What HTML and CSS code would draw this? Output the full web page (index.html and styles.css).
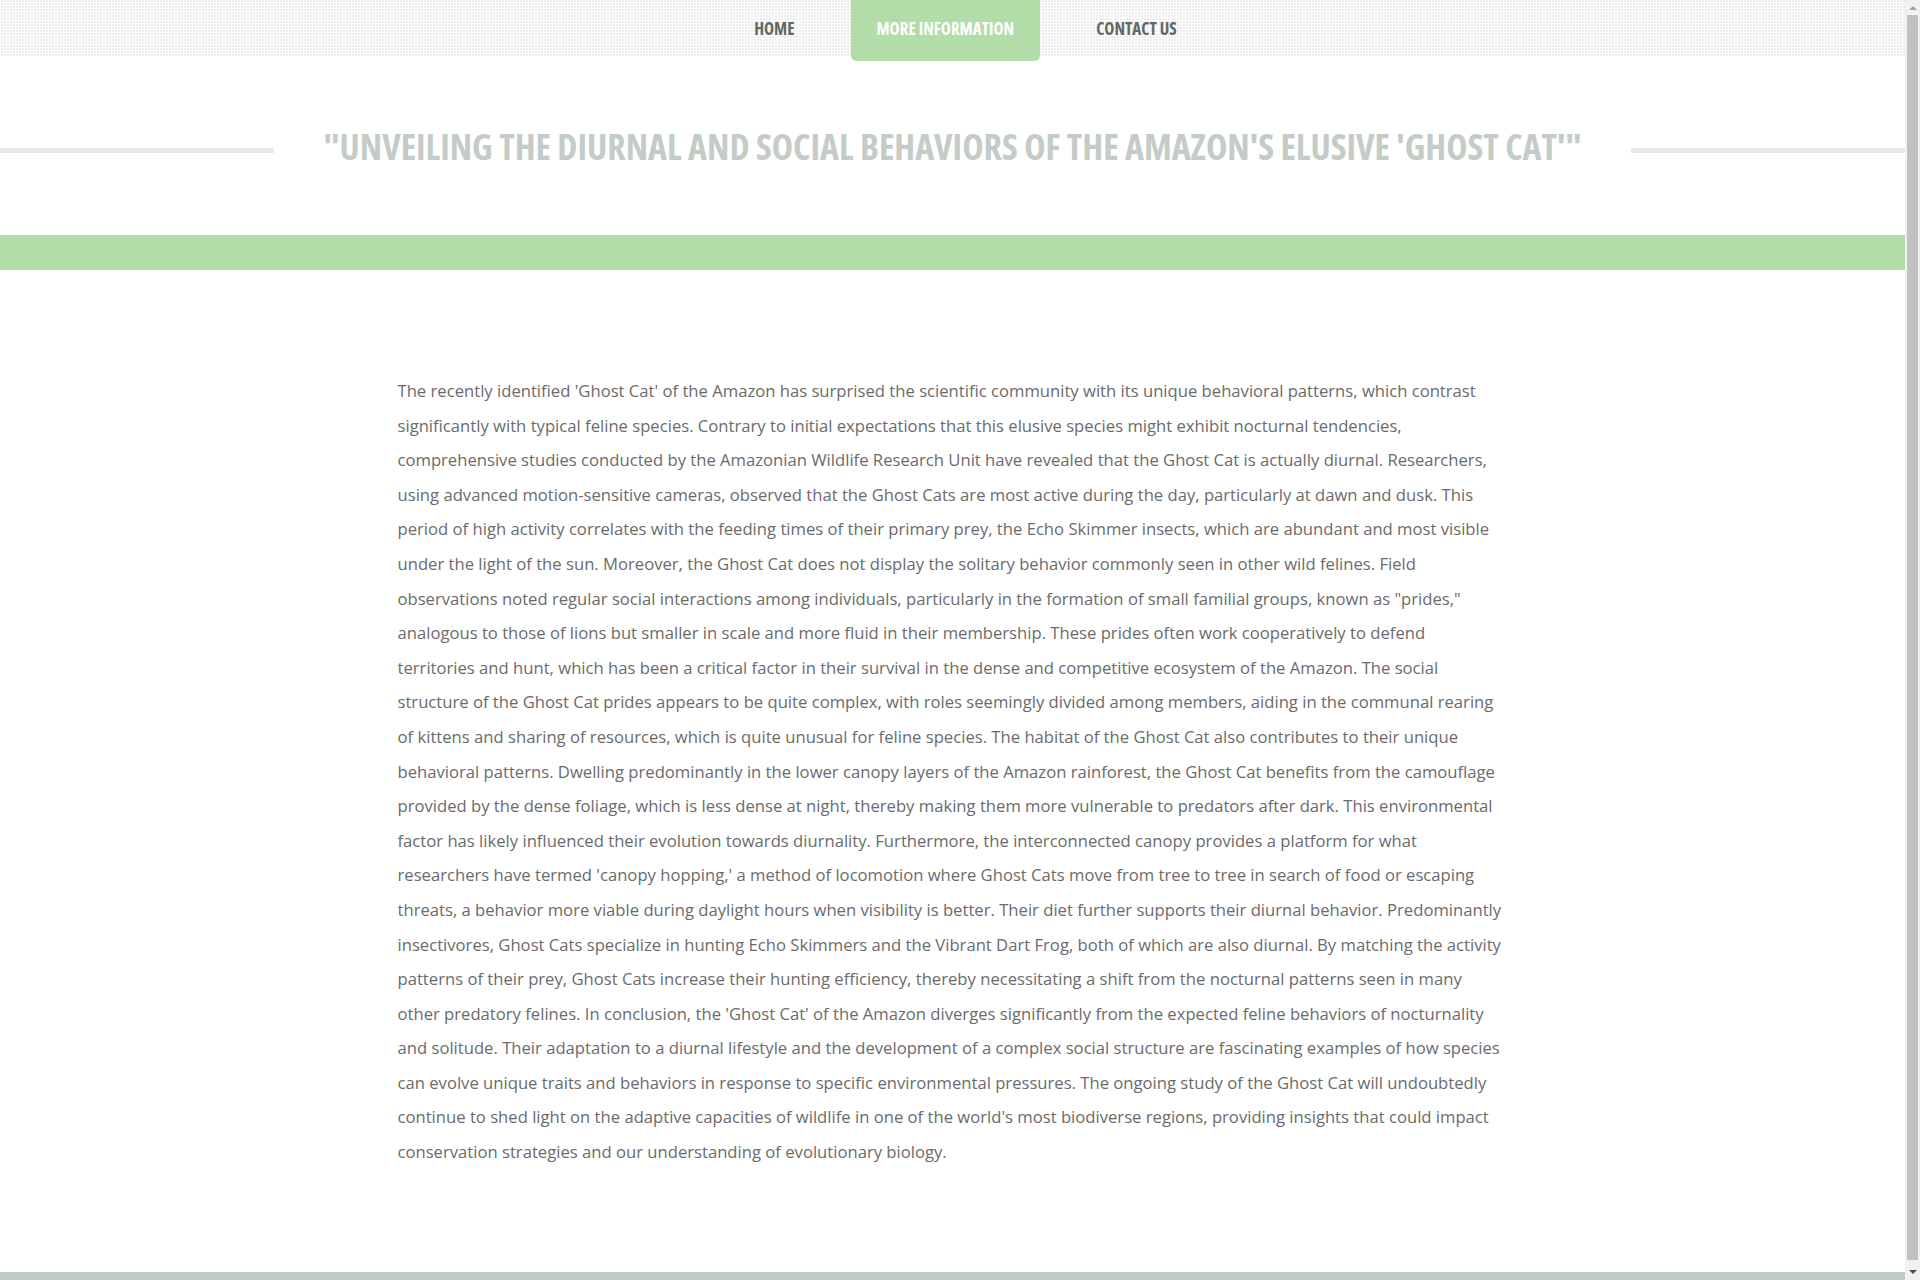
FILE: index.html
```html
<!DOCTYPE html>
<html lang="en">
<head>
<meta charset="utf-8">
<title>Ghost Cat</title>
<link rel="stylesheet" href="styles.css">
</head>
<body>
<div class="page">
<header class="topnav">
  <ul class="menu">
    <li><a href="#">HOME</a></li>
    <li class="active"><a href="#">MORE INFORMATION</a></li>
    <li><a href="#">CONTACT US</a></li>
  </ul>
</header>
<section class="heading">
  <span class="rule"></span>
  <h1>"UNVEILING THE DIURNAL AND SOCIAL BEHAVIORS OF THE AMAZON'S ELUSIVE 'GHOST CAT'"</h1>
  <span class="rule"></span>
</section>
<div class="band"></div>
<main class="content">
  <p>The recently identified 'Ghost Cat' of the Amazon has surprised the scientific community with its unique behavioral patterns, which contrast significantly with typical feline species. Contrary to initial expectations that this elusive species might exhibit nocturnal tendencies, comprehensive studies conducted by the Amazonian Wildlife Research Unit have revealed that the Ghost Cat is actually diurnal. Researchers, using advanced motion-sensitive cameras, observed that the Ghost Cats are most active during the day, particularly at dawn and dusk. This period of high activity correlates with the feeding times of their primary prey, the Echo Skimmer insects, which are abundant and most visible under the light of the sun. Moreover, the Ghost Cat does not display the solitary behavior commonly seen in other wild felines. Field observations noted regular social interactions among individuals, particularly in the formation of small familial groups, known as "prides," analogous to those of lions but smaller in scale and more fluid in their membership. These prides often work cooperatively to defend territories and hunt, which has been a critical factor in their survival in the dense and competitive ecosystem of the Amazon. The social structure of the Ghost Cat prides appears to be quite complex, with roles seemingly divided among members, aiding in the communal rearing of kittens and sharing of resources, which is quite unusual for feline species. The habitat of the Ghost Cat also contributes to their unique behavioral patterns. Dwelling predominantly in the lower canopy layers of the Amazon rainforest, the Ghost Cat benefits from the camouflage provided by the dense foliage, which is less dense at night, thereby making them more vulnerable to predators after dark. This environmental factor has likely influenced their evolution towards diurnality. Furthermore, the interconnected canopy provides a platform for what researchers have termed 'canopy hopping,' a method of locomotion where Ghost Cats move from tree to tree in search of food or escaping threats, a behavior more viable during daylight hours when visibility is better. Their diet further supports their diurnal behavior. Predominantly insectivores, Ghost Cats specialize in hunting Echo Skimmers and the Vibrant Dart Frog, both of which are also diurnal. By matching the activity patterns of their prey, Ghost Cats increase their hunting efficiency, thereby necessitating a shift from the nocturnal patterns seen in many other predatory felines. In conclusion, the 'Ghost Cat' of the Amazon diverges significantly from the expected feline behaviors of nocturnality and solitude. Their adaptation to a diurnal lifestyle and the development of a complex social structure are fascinating examples of how species can evolve unique traits and behaviors in response to specific environmental pressures. The ongoing study of the Ghost Cat will undoubtedly continue to shed light on the adaptive capacities of wildlife in one of the world's most biodiverse regions, providing insights that could impact conservation strategies and our understanding of evolutionary biology.</p>
</main>
<footer class="foot"></footer>
</div>
<div class="scrollbar" aria-hidden="true">
  <span class="arrow up"></span>
  <span class="thumb"></span>
  <span class="arrow down"></span>
</div>
</body>
</html>
```
FILE: styles.css
```css
html, body {
  margin: 0;
  padding: 0;
  background: #ffffff;
}
body {
  font-family: "Open Sans", "Liberation Sans", sans-serif;
  color: #6b6b6b;
}
.page {
  margin-right: 15px;
}
.topnav {
  height: 56px;
  background-image:
    linear-gradient(90deg, #ffffff 1px, transparent 1px),
    linear-gradient(0deg, #ffffff 1px, transparent 1px);
  background-size: 3px 3px;
  background-color: #ececec;
  display: flex;
  justify-content: center;
}
.menu {
  list-style: none;
  margin: 0 0 0 26px;
  padding: 0;
  display: flex;
  align-items: flex-start;
  gap: 30px;
}
.menu li a {
  display: block;
  padding: 17px 26px 0;
  height: 44px;
  font-family: "Open Sans", "Liberation Sans Narrow", sans-serif;
  font-stretch: 75%;
  font-weight: 700;
  font-size: 17px;
  color: #5f6965;
  text-decoration: none;
  border-radius: 0 0 5px 5px;
}
.menu li.active a {
  background: #b2dda9;
  color: #ffffff;
}
.heading {
  display: flex;
  align-items: center;
  gap: 50px;
  height: 179px;
}
.rule {
  flex: 1;
  height: 5px;
  background: #e8eaea;
  margin-top: 10px;
}
.heading h1 {
  margin: 2px 0 0;
  font-family: "Open Sans", "Liberation Sans Narrow", sans-serif;
  font-stretch: 75%;
  font-weight: 700;
  font-size: 36px;
  color: #c3ccc7;
  white-space: nowrap;
}
.band {
  height: 35px;
  background: #b2dda9;
}
.content {
  max-width: 1110px;
  margin: 0 auto;
  padding: 104px 0 102px;
}
.content p {
  margin: 0 6px 0 0;
  font-size: 16.65px;
  line-height: 34.6px;
  color: #6b6b6b;
}
.foot {
  height: 40px;
  background: #c3cbc5;
}
.scrollbar {
  position: fixed;
  top: 0;
  right: 0;
  width: 15px;
  height: 100vh;
  background: #f1f1f1;
}
.scrollbar .thumb {
  position: absolute;
  top: 15px;
  bottom: 20px;
  left: 2px;
  right: 2px;
  background: #c1c1c1;
}
.scrollbar .arrow {
  position: absolute;
  left: 4px;
  width: 0;
  height: 0;
  border-left: 4px solid transparent;
  border-right: 4px solid transparent;
}
.scrollbar .arrow.up {
  top: 6px;
  border-bottom: 4px solid #a3a3a3;
}
.scrollbar .arrow.down {
  bottom: 6px;
  border-top: 4px solid #505050;
}
```
